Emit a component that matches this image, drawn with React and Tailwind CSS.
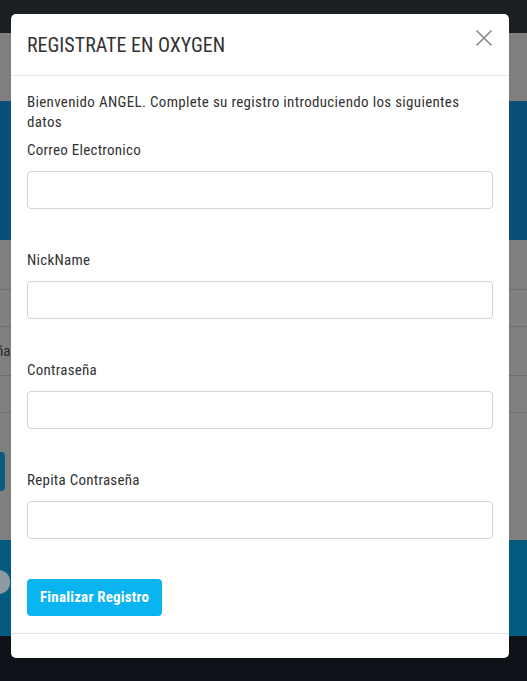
const fields = [
  { label: "Correo Electronico", type: "email" },
  { label: "NickName", type: "text" },
  { label: "Contraseña", type: "password" },
  { label: "Repita Contraseña", type: "password" },
];

function Backdrop() {
  return (
    <div className="flex flex-col h-[681px] overflow-hidden">
      <div className="h-[33px] bg-[#1c1f23]" />
      <div className="h-[68px] bg-[#7f7f7f]" />
      <div className="h-[139px] bg-[#0a4f78]" />
      <div className="h-[300px] bg-[#7f7f7f] flex flex-col">
        <div className="h-[50px] border-b border-[#6e6e6e]" />
        <div className="h-[37px] border-b border-[#6e6e6e]" />
        <div className="h-[49px] border-b border-[#6e6e6e] flex items-center">
          <span className="-ml-[57px] text-[15px] text-[#2a2a2a]">Contraseña</span>
        </div>
        <div className="h-[37px] border-b border-[#6e6e6e]" />
        <div className="pt-[39px]">
          <div className="-ml-[70px] w-[75px] h-[39px] rounded-[4px] bg-[#0b5a80]" />
        </div>
      </div>
      <div className="h-[96px] bg-[#035b80] flex items-center">
        <div className="-ml-[12px] -mt-[12px] w-[22px] h-[24px] rounded-full bg-[#8e9aa2]" />
      </div>
      <div className="flex-1 bg-[#0e1118]" />
    </div>
  );
}

export default function App() {
  return (
    <div className="relative w-[527px] h-[681px] overflow-hidden font-['Roboto',sans-serif] font-stretch-condensed text-[#333]">
      <Backdrop />
      <div className="absolute left-[11px] top-[14px] w-[498px] h-[644px] bg-white rounded-[5px] flex flex-col">
        <div className="h-[62px] shrink-0 flex items-center justify-between px-4 border-b border-[#e5e5e5]">
          <h4 className="text-[20px] text-[#333] mt-[1px]">REGISTRATE EN OXYGEN</h4>
          <button className="text-[#8a8a8a] -mt-[14px]">
            <svg width="18" height="18" viewBox="0 0 18 18" fill="none" stroke="currentColor" strokeWidth="1.6">
              <path d="M1.5 1.5L16.5 16.5M16.5 1.5L1.5 16.5" />
            </svg>
          </button>
        </div>
        <div className="px-4 pt-4 pb-[17px] border-b border-[#e5e5e5]">
          <p className="text-[15px] leading-[20px] tracking-[0.32px]">
            Bienvenido ANGEL. Complete su registro introduciendo los siguientes datos
          </p>
          <form className="flex flex-col gap-[41px] mt-2" onSubmit={(e) => e.preventDefault()}>
            {fields.map((f) => (
              <div key={f.label} className="flex flex-col">
                <label className="text-[15px] leading-[20px] tracking-[0.25px] mb-[11px]">{f.label}</label>
                <input
                  type={f.type}
                  className="h-[38px] w-full rounded-[4px] border border-[#ced4da] px-3 outline-none"
                />
              </div>
            ))}
            <div className="-mt-px">
              <button className="h-[37px] px-[13px] rounded-[4px] bg-[#0ab4f0] text-white text-[15px] font-bold tracking-[0.2px]">
                Finalizar Registro
              </button>
            </div>
          </form>
        </div>
      </div>
    </div>
  );
}
